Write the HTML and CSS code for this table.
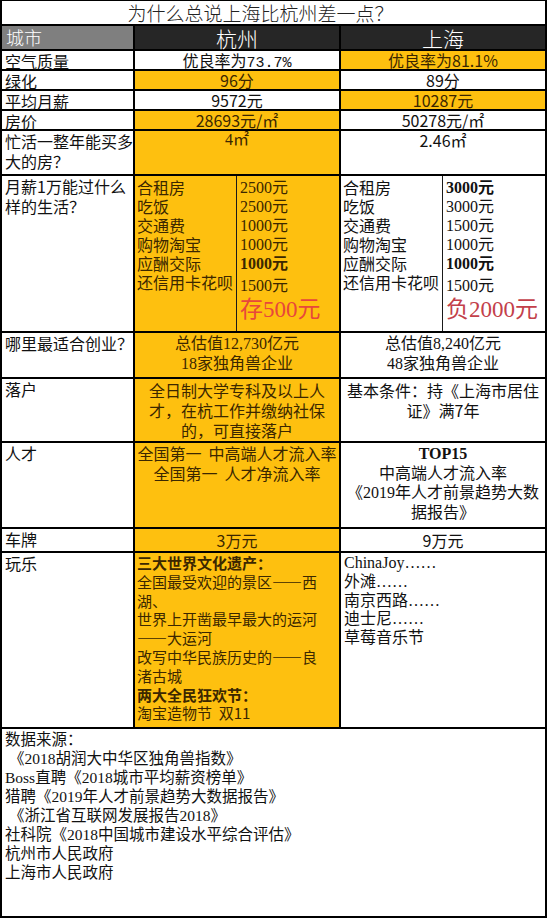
FILE: index.html
```html
<!DOCTYPE html>
<html lang="zh-CN">
<head>
<meta charset="utf-8">
<title>为什么总说上海比杭州差一点？</title>
<link rel="stylesheet" href="styles.css">
</head>
<body>
<div class="sheet">
  <div class="title">为什么总说上海比杭州差一点？</div>

  <div class="hdr-label">城市</div>
  <div class="hdr">杭州</div>
  <div class="hdr">上海</div>

  <div class="label">空气质量</div>
  <div class="val">优良率为<span class="mono">73.7%</span></div>
  <div class="val hi">优良率为81.1%</div>

  <div class="label">绿化</div>
  <div class="val hi">96分</div>
  <div class="val">89分</div>

  <div class="label">平均月薪</div>
  <div class="val">9572元</div>
  <div class="val hi">10287元</div>

  <div class="label">房价</div>
  <div class="val hi">28693元/㎡</div>
  <div class="val">50278元/㎡</div>

  <div class="label">忙活一整年能买多<br>大的房？</div>
  <div class="val hi serif">4㎡</div>
  <div class="val">2.46㎡</div>

  <div class="label">月薪1万能过什么<br>样的生活？</div>
  <div class="split hi">
    <div class="items">合租房<br>吃饭<br>交通费<br>购物淘宝<br>应酬交际<br>还信用卡花呗</div>
    <div class="amounts">2500元<br>2500元<br>1000元<br>1000元<br><b>1000元</b><br><span class="last">1500元</span><span class="save">存500元</span></div>
  </div>
  <div class="split">
    <div class="items">合租房<br>吃饭<br>交通费<br>购物淘宝<br>应酬交际<br>还信用卡花呗</div>
    <div class="amounts"><b>3000元</b><br>3000元<br>1500元<br>1000元<br><b>1000元</b><br><span class="last">1500元</span><span class="owe">负2000元</span></div>
  </div>

  <div class="label">哪里最适合创业？</div>
  <div class="val hi multi serif">总估值12,730亿元<br>18家独角兽企业</div>
  <div class="val multi serif">总估值8,240亿元<br>48家独角兽企业</div>

  <div class="label">落户</div>
  <div class="val hi multi">全日制大学专科及以上人<br>才，在杭工作并缴纳社保<br>的，可直接落户</div>
  <div class="val multi">基本条件：持《上海市居住<br>证》满7年</div>

  <div class="label">人才</div>
  <div class="val hi multi tight">全国第一&nbsp;&nbsp;中高端人才流入率<br>全国第一&nbsp;&nbsp;人才净流入率</div>
  <div class="val multi tight serif"><b>TOP15</b><br>中高端人才流入率<br>《2019年人才前景趋势大数<br>据报告》</div>

  <div class="label">车牌</div>
  <div class="val hi plate">3万元</div>
  <div class="val plate">9万元</div>

  <div class="label">玩乐</div>
  <div class="list hi"><b>三大世界文化遗产：</b><br>全国最受欢迎的景区——西<br>湖、<br>世界上开凿最早最大的运河<br>——大运河<br>改写中华民族历史的——良<br>渚古城<br><b>两大全民狂欢节：</b><br>淘宝造物节&nbsp;&nbsp;双11</div>
  <div class="list serif">ChinaJoy……<br>外滩……<br>南京西路……<br>迪士尼……<br>草莓音乐节</div>

  <div class="sources serif">数据来源：<br>&nbsp;《2018胡润大中华区独角兽指数》<br>Boss直聘《2018城市平均薪资榜单》<br>猎聘《2019年人才前景趋势大数据报告》<br>&nbsp;《浙江省互联网发展报告2018》<br>社科院《2018中国城市建设水平综合评估》<br>杭州市人民政府<br>上海市人民政府</div>
</div>
</body>
</html>
```

FILE: styles.css
```css
html, body {
  margin: 0;
  padding: 0;
  background: #fff;
}

body {
  font-family: "Noto Sans CJK SC", "Noto Sans", sans-serif;
  color: #111;
}

.sheet {
  width: 547px;
  box-sizing: border-box;
  display: grid;
  grid-template-columns: 131px 204px 204px;
  grid-template-rows: 23px 23px 18px 18px 18px 18px 43px 155px 44px 62px 84px 22px 174px 187px;
  gap: 2px;
  background: #000;
  border: 2px solid #000;
  border-top-width: 1px;
}

.sheet > div {
  background: #fff;
  font-size: 16px;
  line-height: 18px;
  min-width: 0;
}

.sheet > .hi {
  background: #fec00f;
  color: #3b2700;
}

.serif {
  font-family: "Liberation Serif", "Noto Sans CJK SC", serif;
}

.mono {
  font-family: "Liberation Mono", monospace;
  font-size: 15px;
}

.sheet > .title {
  grid-column: 1 / 4;
  text-align: center;
  font-size: 19px;
  line-height: 23px;
  font-weight: 300;
  color: #222;
  padding-right: 26px;
}

.sheet > .hdr-label {
  background: #7f7f7f;
  color: #fff;
  font-size: 18px;
  line-height: 23px;
  padding-left: 4px;
  font-weight: 300;
}

.sheet > .hdr {
  background: #262626;
  color: #fff;
  text-align: center;
  font-size: 21px;
  line-height: 25px;
  font-weight: 300;
}

.sheet > .label {
  padding-left: 3px;
  line-height: 20px;
}

.sheet > .val {
  text-align: center;
}

.sheet > .multi {
  line-height: 20px;
  padding-top: 1px;
}

.sheet > .tight {
  line-height: 19.5px;
  padding-top: 1px;
}

.sheet > .plate {
  line-height: 22px;
}

.sheet > .split {
  display: grid;
  grid-template-columns: 101px 1fr;
}

.items {
  padding: 2px 0 0 2px;
  line-height: 19px;
}

.amounts {
  border-left: 1px solid #1a1a1a;
  padding: 2px 0 0 3px;
  line-height: 19px;
  font-family: "Liberation Serif", "Noto Sans CJK SC", serif;
  white-space: nowrap;
}

.amounts .last {
  display: inline-block;
  margin-top: 3px;
}

.save,
.owe {
  display: block;
  font-size: 23px;
  line-height: 30px;
}

.save {
  color: #e8473b;
}

.owe {
  color: #c3404a;
}

.sheet > .list {
  font-size: 15px;
  line-height: 18.8px;
  padding: 1px 0 0 2px;
}

.sheet > .list.serif {
  font-size: 16px;
  padding-left: 3px;
}

.sheet > .sources {
  grid-column: 1 / 4;
  font-size: 15.5px;
  line-height: 19px;
  padding: 1px 0 0 3px;
}
```
